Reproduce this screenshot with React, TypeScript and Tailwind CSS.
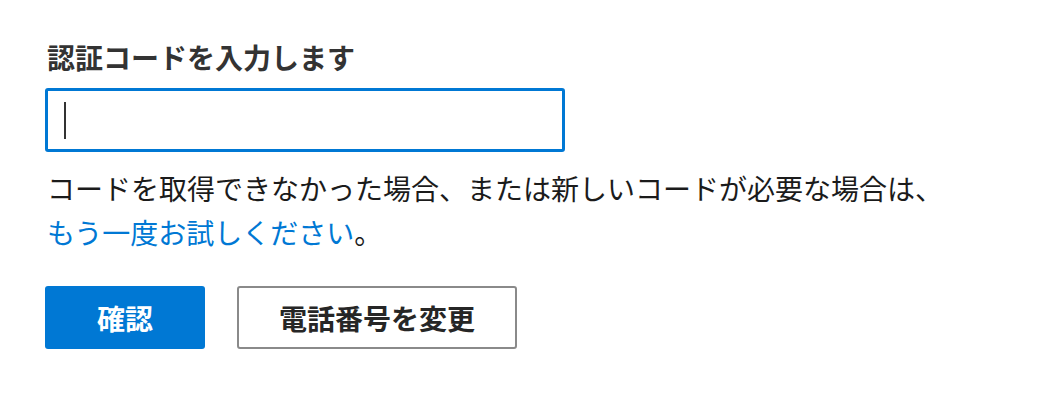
import React from "react";

export default function App() {
  return (
    <div className="min-h-[410px] w-[1038px] bg-white pl-[45px] pt-[38px] font-['Noto_Sans_CJK_JP',sans-serif]">
      <div className="pl-[2px] text-[28px] font-bold leading-[38px] text-[#333]">認証コードを入力します</div>

      <div className="mt-[12px] flex h-[64px] w-[520px] items-center rounded-[3px] border-[3px] border-[#0078d4] pl-[16px]">
        <div className="h-[37px] w-[2px] bg-[#333]" />
      </div>

      <p className="mt-[14px] pl-[2px] text-[28px] leading-[44px] text-[#1b1b1b]">
        コードを取得できなかった場合、または新しいコードが必要な場合は、
        <br />
        <a href="#" className="text-[#0078d4]">
          もう一度お試しください
        </a>
        。
      </p>

      <div className="mt-[32px] flex gap-[32px]">
        <button className="h-[63px] w-[160px] rounded-[3px] bg-[#0078d4] text-[28px] font-bold text-white">
          確認
        </button>
        <button className="h-[63px] w-[280px] rounded-[3px] border-2 border-[#8a8a8a] bg-white text-[28px] font-bold text-[#262626]">
          電話番号を変更
        </button>
      </div>
    </div>
  );
}
